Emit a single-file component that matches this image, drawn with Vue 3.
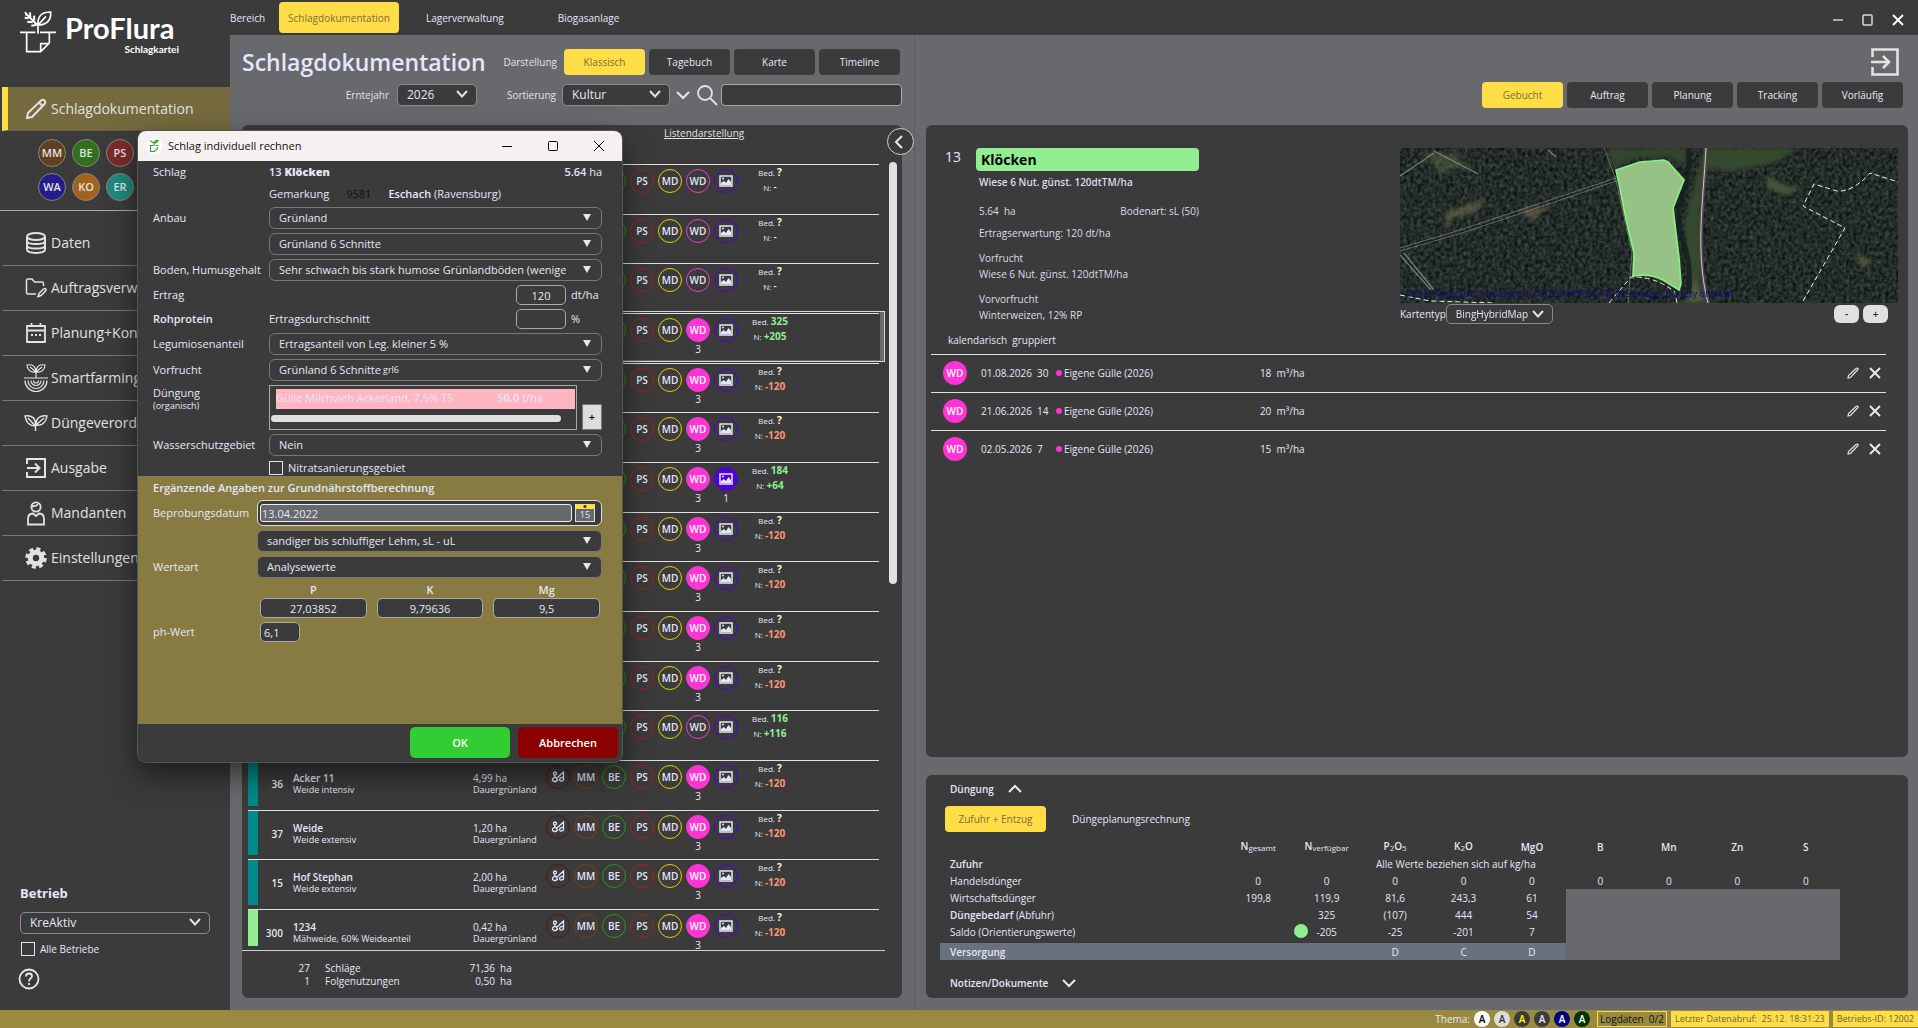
<script setup>
const areas = ['Lagerverwaltung', 'Biogasanlage']
const views = ['Tagebuch', 'Karte', 'Timeline']
const states = ['Auftrag', 'Planung', 'Tracking', 'Vorläufig']
const quick = [
  { t: 'MM', c: '#5f4020' }, { t: 'BE', c: '#30701c' }, { t: 'PS', c: '#7c2a2a' },
  { t: 'WA', c: '#241c8c' }, { t: 'KO', c: '#a0621c' }, { t: 'ER', c: '#1f8a80' },
]
const menu = [
  { t: 'Daten', i: 'db' }, { t: 'Auftragsverwaltung', i: 'folder' }, { t: 'Planung+Kontrolle', i: 'cal' },
  { t: 'Smartfarming', i: 'smart' }, { t: 'Düngeverordnung', i: 'leaf' }, { t: 'Ausgabe', i: 'exit' },
  { t: 'Mandanten', i: 'user' }, { t: 'Einstellungen', i: 'gear' },
]
const unknown = (n, wd) => ({ bed: '?', n, wd })
const fields = [
  unknown('-', 0), unknown('-', 0), unknown('-', 0),
  { bed: '325', n: '+205', wd: 3, sel: true },
  unknown('-120', 3), unknown('-120', 3),
  { bed: '184', n: '+64', wd: 3, img: 1 },
  unknown('-120', 3), unknown('-120', 3), unknown('-120', 3), unknown('-120', 3),
  { bed: '116', n: '+116', wd: 0 },
  { ...unknown('-120', 3), nr: '36', name: 'Acker 11', use: 'Weide intensiv', area: '4,99', color: '#008a8a' },
  { ...unknown('-120', 3), nr: '37', name: 'Weide', use: 'Weide extensiv', area: '1,20', color: '#008a8a' },
  { ...unknown('-120', 3), nr: '15', name: 'Hof Stephan', use: 'Weide extensiv', area: '2,00', color: '#008a8a' },
  { ...unknown('-120', 3), nr: '300', name: '1234', use: 'Mähweide, 60% Weideanteil', area: '0,42', color: '#90ee90' },
]
const tone = (n) => (n[0] === '+' ? 'pos' : n.length > 1 ? 'neg' : '')
const bookings = [
  { d: '01.08.2026', k: '30', m: '18' }, { d: '21.06.2026', k: '14', m: '20' }, { d: '02.05.2026', k: '7', m: '15' },
]
const themes = [
  ['#ffffff', '#000'], ['#dcdcdc', '#333'], ['#3b3b3b', '#ffff00'], ['#3b3b3b', '#e6e6fa'], ['#000080', '#fff'], ['#003300', '#fff'],
]
</script>

<template>
  <div class="app">
    <div class="body">
      <aside class="side">
        <div class="logo">
          <svg width="36" height="42" viewBox="0 0 108 126" fill="none" stroke="#fff" stroke-width="5">
            <path d="M0 64H46M60 64H108M20 64V122H62L88 96V64M62 122V98H88M54 68V40M54 42C52 14 66 3 92 3C94 28 80 42 54 42ZM56 40L78 16" />
            <path d="M52 42L18 8M16 3L20 14M30 4L31 18M42 14L43 28M14 20L26 22M22 32L38 34M34 44L48 42" stroke-width="6" />
          </svg>
          <div class="brand"><b>ProFlura</b><small>Schlagkartei</small></div>
        </div>
        <a class="item active" href="#">
          <svg width="22" height="22" viewBox="0 0 22 22" fill="none" stroke="#e2e2e2" stroke-width="2"><path d="M2 20L3 15L16 2.500Q18 1 19.500 2.500Q21 4 19.500 6L7 19ZM14 4.500L17.500 8" /></svg>
          <span>Schlagdokumentation</span>
        </a>
        <div class="quick">
          <button v-for="q in quick" :key="q.t" :style="{ background: q.c }">{{ q.t }}</button>
        </div>
        <nav class="menu">
          <a v-for="m in menu" :key="m.t" class="item" href="#">
            <svg v-if="m.i === 'db'" width="22" height="22" viewBox="0 0 22 22" fill="none" stroke="#e2e2e2" stroke-width="2"><ellipse cx="11" cy="4.500" rx="9" ry="3.500" /><path d="M2 4.500V17.500C2 22 20 22 20 17.500V4.500M2 9C2 13 20 13 20 9M2 13.500C2 17.500 20 17.500 20 13.500" /></svg>
            <svg v-else-if="m.i === 'folder'" width="22" height="22" viewBox="0 0 22 22" fill="none" stroke="#e2e2e2" stroke-width="1.500"><path d="M11 17H3Q1.500 17 1.500 15.500V3.500Q1.500 2 3 2H7L9.500 5H17Q18.500 5 18.500 6.500V9M13 19.500L14 16.500L18.500 12Q20 11 21 12.500L20.500 14L16 18.500Z" /></svg>
            <svg v-else-if="m.i === 'cal'" width="22" height="22" viewBox="0 0 22 22" fill="none" stroke="#e2e2e2" stroke-width="1.800"><path d="M2 4H20V20H2ZM2 8.500H20M6.500 1V5M15.500 1V5" /><path d="M6 13H8M10 13H12M14 13H16" stroke-width="2" /></svg>
            <svg v-else-if="m.i === 'smart'" width="24" height="30" viewBox="0 0 24 30" fill="none" stroke="#e2e2e2" stroke-width="1.200"><path d="M0 15H24M12 15V7M12 9C6 10 3 6 3 2C8 1 12 3 12 9ZM12 9C18 10 21 6 21 2C16 1 12 3 12 9ZM6 4L12 9L18 4M1 17.500A11 11 0 0 0 23 17.500M4 17.500A8 8 0 0 0 20 17.500M7 17.500A5 5 0 0 0 17 17.500M9.500 17.500A2.500 2.500 0 0 0 14.500 17.500" /></svg>
            <svg v-else-if="m.i === 'leaf'" width="24" height="18" viewBox="0 0 24 18" fill="none" stroke="#e2e2e2" stroke-width="1.500"><path d="M1 2C8 1 12 4 11.500 12C5 12 2 8 1 2ZM4 4L11.500 12V17M23 2C16 1 12 4 12 11C19 12 22 8 23 2ZM20 4L12 11" /></svg>
            <svg v-else-if="m.i === 'exit'" width="22" height="22" viewBox="0 0 22 22" fill="none" stroke="#e2e2e2" stroke-width="2"><path d="M2 7V2H20V20H2V15M2 11H14M10 6.500L14.500 11L10 15.500" /></svg>
            <svg v-else-if="m.i === 'user'" width="20" height="25" viewBox="0 0 20 25" fill="none" stroke="#e2e2e2" stroke-width="1.800"><circle cx="10" cy="6" r="4.600" /><path d="M5.500 5Q10 6 12 3M2 23.500V18Q2 12.500 7 12.500L10 15L13 12.500Q18 12.500 18 18V23.500Z" /></svg>
            <svg v-else width="22" height="22" viewBox="0 0 22 22"><circle cx="11" cy="11" r="5.700" fill="none" stroke="#e2e2e2" stroke-width="5" /><circle cx="11" cy="11" r="9" fill="none" stroke="#e2e2e2" stroke-width="3.500" stroke-dasharray="4 3.070" /></svg>
            <span>{{ m.t }}</span>
          </a>
        </nav>
        <div class="farm">
          <label class="farm-title" for="farm">Betrieb</label>
          <span class="sel chev"><select id="farm"><option>KreAktiv</option></select><svg width="12" height="8" viewBox="0 0 12 8"><path d="M1 1L6 6.500L11 1" /></svg></span>
          <label class="check"><input type="checkbox" />Alle Betriebe</label>
          <button class="help" aria-label="Hilfe"><svg width="22" height="22" viewBox="0 0 22 22" fill="none" stroke="#e8e8e8" stroke-width="1.800"><circle cx="11" cy="11" r="9.500" /><path d="M8 8.500Q8 5.500 11 5.500Q14 5.500 14 8Q14 9.500 12.500 10.500Q11 11.500 11 13.500M11 15V17" /></svg></button>
        </div>
      </aside>

      <div class="content">
        <header class="top">
          <span class="bereich">Bereich</span>
          <button class="tab on">Schlagdokumentation</button>
          <button v-for="a in areas" :key="a" class="tab">{{ a }}</button>
          <div class="win">
            <button aria-label="Minimieren"><svg width="12" height="12" viewBox="0 0 12 12"><path d="M1 6H11" stroke="#a8acb8" stroke-width="2" /></svg></button>
            <button aria-label="Maximieren"><svg width="12" height="12" viewBox="0 0 12 12"><rect x="1" y="1" width="9" height="10" rx="1" fill="none" stroke="#d8d8e8" stroke-width="1.500" /></svg></button>
            <button aria-label="Schließen"><svg width="12" height="12" viewBox="0 0 12 12"><path d="M1 1L11 11M11 1L1 11" stroke="#fff" stroke-width="1.800" /></svg></button>
          </div>
        </header>

        <div class="cols">
          <section class="left">
            <div class="row1">
              <h1>Schlagdokumentation</h1>
              <span class="lab">Darstellung</span>
              <button class="btn on">Klassisch</button>
              <button v-for="v in views" :key="v" class="btn">{{ v }}</button>
            </div>
            <div class="row2">
              <label class="lab" for="year">Erntejahr</label>
              <span class="sel chev year"><select id="year"><option>2026</option></select><svg width="12" height="8" viewBox="0 0 12 8"><path d="M1 1L6 6.500L11 1" /></svg></span>
              <label class="lab wide" for="sort">Sortierung</label>
              <span class="sel chev sort"><select id="sort"><option>Kultur</option></select><svg width="12" height="8" viewBox="0 0 12 8"><path d="M1 1L6 6.500L11 1" /></svg></span>
              <svg class="dir" width="14" height="10" viewBox="0 0 14 10" fill="none" stroke="#e6e6fa" stroke-width="2"><path d="M1 2L7 8L13 2" /></svg>
              <svg width="22" height="22" viewBox="0 0 22 22" fill="none" stroke="#e2e2e2" stroke-width="1.800"><circle cx="9" cy="9" r="7" /><path d="M14 14L21 21" /></svg>
              <input class="search" type="text" aria-label="Suche" />
            </div>
            <div class="panel list-panel">
              <button class="back" aria-label="Zurück"><svg width="10" height="14" viewBox="0 0 10 14" fill="none" stroke="#e6e6fa" stroke-width="2"><path d="M8 1L2 7L8 13" /></svg></button>
              <div class="thumb"></div>
              <div class="list-top"><a href="#">Listendarstellung</a></div>
              <div class="list">
                <div v-for="(f, i) in fields" :key="i" class="field" :class="{ selected: f.sel }">
                  <i class="strip" :style="{ background: f.color || 'transparent' }"></i>
                  <span class="nr">{{ f.nr }}</span>
                  <div class="two name"><b>{{ f.name }}</b><span>{{ f.use }}</span></div>
                  <div class="two area"><template v-if="f.area"><span>{{ f.area }} ha</span><span>Dauergrünland</span></template></div>
                  <div class="rounds">
                    <div class="rc"><i class="sd"><svg width="14" height="12" viewBox="0 0 14 12" fill="none" stroke="#e6e6fa" stroke-width="1.300"><circle cx="4" cy="2.500" r="1.500" /><path d="M3 4L6.500 9Q5 11 3 10.500Q.5 9 2 7.500Q3 6 5 6.500M6 7L12.500 1V9.500M12 6.500Q9 6 8.500 8.500Q9 11.500 12.500 9" /></svg></i></div>
                    <div class="rc"><i class="mm"><template v-if="f.nr">MM</template></i></div>
                    <div class="rc"><i class="be"><template v-if="f.nr">BE</template></i></div>
                    <div class="rc"><i class="ps">PS</i></div>
                    <div class="rc"><i class="md">MD</i></div>
                    <div class="rc"><i class="wd" :class="{ full: f.wd }">WD</i><span v-if="f.wd">{{ f.wd }}</span></div>
                    <div class="rc"><i class="im" :class="{ full: f.img }"><svg width="14" height="12" viewBox="0 0 14 12"><rect x="1" y="1" width="12" height="10" fill="none" stroke="#e6e6fa" stroke-width="1.500" /><path d="M2 10V8L5 6L7 8L9.500 4L12 7V10Z" fill="#e6e6fa" /><circle cx="4" cy="3.500" r="1" fill="#e6e6fa" /></svg></i><span v-if="f.img">{{ f.img }}</span></div>
                  </div>
                  <div class="need">
                    <div>Bed. <b :class="f.bed === '?' ? 'q' : 'pos'">{{ f.bed }}</b></div>
                    <div>N: <b :class="tone(f.n)">{{ f.n }}</b></div>
                  </div>
                </div>
              </div>
              <div class="sums">
                <span class="num">27</span><span>Schläge</span><span class="num">71,36</span><span>ha</span>
                <span class="num">1</span><span>Folgenutzungen</span><span class="num">0,50</span><span>ha</span>
              </div>
            </div>
          </section>

          <section class="right">
            <div class="rhead">
              <button class="out" aria-label="Ausgabe"><svg width="28" height="28" viewBox="0 0 28 28" fill="none" stroke="#e2e2e2" stroke-width="2.600"><path d="M1.500 9V1.500H26.500V26.500H1.500V19M0 14H17M12 8L18 14L12 20" /></svg></button>
              <div class="states">
                <button class="btn on">Gebucht</button>
                <button v-for="s in states" :key="s" class="btn">{{ s }}</button>
              </div>
            </div>
            <div class="panel detail">
              <div class="info">
                <span class="no">13</span>
                <div class="facts">
                  <h2>Klöcken</h2>
                  <p class="semi crop">Wiese 6 Nut. günst. 120dtTM/ha</p>
                  <p class="split"><span>5.64&nbsp; ha</span><span>Bodenart: sL (50)</span></p>
                  <p class="yield">Ertragserwartung: <span class="med">120</span> dt/ha</p>
                  <p>Vorfrucht</p>
                  <p class="med pre">Wiese 6 Nut. günst. 120dtTM/ha</p>
                  <p>Vorvorfrucht</p>
                  <p class="med">Winterweizen, 12% RP</p>
                </div>
                <div class="mapbox">
                  <div class="map">
                    <svg width="100%" height="155" viewBox="0 0 498 155" preserveAspectRatio="none">
                      <defs>
                        <filter id="forest" x="0" y="0" width="100%" height="100%" color-interpolation-filters="sRGB">
                          <feTurbulence type="fractalNoise" baseFrequency="0.28 0.25" numOctaves="4" seed="4" />
                          <feColorMatrix values="0.32 0 0 0 -0.02  0.32 0 0 0 0.01  0.3 0 0 0 0.01  0 0 0 0 1" />
                        </filter>
                        <filter id="soft"><feGaussianBlur stdDeviation="2" /></filter>
                      </defs>
                      <rect width="498" height="155" fill="#20272a" />
                      <rect width="498" height="155" filter="url(#forest)" />
                      <g filter="url(#soft)">
                        <path d="M208 0H288L286 18L270 10H238L212 20Z" fill="#33452f" />
                        <path d="M304 0H400L372 16L330 23L308 20L300 60L302 155H290L284 75L292 45Z" fill="#34482f" />
                        <path d="M46 64L86 50L76 64L52 70L46 84Z" fill="#66694a" opacity=".7" />
                        <path d="M18 5H66L56 10L76 22L60 20L38 26L28 10Z" fill="#5a6744" opacity=".5" />
                        <path d="M120 63L150 58L132 72Z" fill="#806f54" opacity=".6" />
                        <path d="M368 28L385 38L402 40L386 47L366 40Z" fill="#44573a" />
                        <path d="M455 107L474 113L462 119Z" fill="#56593c" />
                        <path d="M294 130L306 155H286Z" fill="#4d5c3c" />
                      </g>
                      <g fill="none" stroke="#9aa09b" stroke-width="1.200" opacity=".7">
                        <path d="M204 0L216 32L222 60L232 105L228 155M0 100L60 82L120 62L216 30M0 103L62 85L122 65L216 33" stroke-width=".8" />
                        <path d="M0 107L31 142M4 105L34 142M34 3L78 26M0 28L34 5M148 2L156 9" />
                      </g>
                      <path d="M306 0C303 55 295 105 308 155" fill="none" stroke="#4c484a" stroke-width="4" />
                      <path d="M306 0C303 55 295 105 308 155" fill="none" stroke="#cfc4ca" stroke-width="1" />
                      <path d="M288 0C293 32 276 54 278 72S292 104 289 145" fill="none" stroke="#151e20" stroke-width="5" opacity=".8" />
                      <path d="M216 22L240 14L264 12L268 14L284 32L273 60L279 110L281 136L279 142L263 132Q250 125 233 128L234 105Q224 65 220 40Z" fill="#96c285" stroke="#86f182" stroke-width="1.700" />
                      <path d="M209 155L231 129Q255 128 275 144L277 155M0 147L30 153L95 155M403 153L445 80L403 58L414 36L437 43Q453 44 470 25L498 34" fill="none" stroke="#e9ece9" stroke-width="1" stroke-dasharray="5 3" />
                    </svg>
                    <span class="credit">©2025 Microsoft Corporation, ©2025 NAVTEQ, ©2025 Image courtesy of NASA</span>
                  </div>
                  <div class="mapbar">
                    <label for="maptype">Kartentyp</label>
                    <span class="sel chev maptype"><select id="maptype"><option>BingHybridMap</option></select><svg width="12" height="8" viewBox="0 0 12 8"><path d="M1 1L6 6.500L11 1" /></svg></span>
                    <div class="zooms"><button class="zoom">-</button><button class="zoom">+</button></div>
                  </div>
                </div>
              </div>
              <p class="grouped">kalendarisch&nbsp; gruppiert</p>
              <div class="bookings">
                <div v-for="b in bookings" :key="b.d" class="booking">
                  <i>WD</i><span class="d">{{ b.d }}</span><span class="k">{{ b.k }}</span><u></u><span class="g">Eigene Gülle (2026)</span><span class="m">{{ b.m }}&nbsp; m³/ha</span>
                  <button aria-label="Bearbeiten"><svg width="12" height="12" viewBox="0 0 12 12" fill="none" stroke="#e2e2e2" stroke-width="1.200"><path d="M1 11L1.500 8.500L9 1.500Q10.500 .5 11.200 2L10.500 3L3.500 10.500Z" /></svg></button>
                  <button aria-label="Löschen"><svg width="12" height="12" viewBox="0 0 12 12"><path d="M1 1L11 11M11 1L1 11" stroke="#e8e8e8" stroke-width="2" /></svg></button>
                </div>
              </div>
            </div>

            <div class="panel duen">
              <div class="fold">Düngung<svg width="14" height="10" viewBox="0 0 14 10" fill="none" stroke="#e8e8f0" stroke-width="2"><path d="M1 8L7 2L13 8" /></svg></div>
              <div class="dtabs"><button class="btn on z">Zufuhr + Entzug</button><button class="plain">Düngeplanungsrechnung</button></div>
              <table>
                <thead><tr><th class="rowhead"></th><th>N<small>gesamt</small></th><th>N<small>verfügbar</small></th><th>P<small>2</small>O<small>5</small></th><th>K<small>2</small>O</th><th>MgO</th><th>B</th><th>Mn</th><th>Zn</th><th>S</th></tr></thead>
                <tbody>
                  <tr><th>Zufuhr</th><td></td><td></td><td colspan="3" class="note">Alle Werte beziehen sich auf kg/ha</td><td colspan="4"></td></tr>
                  <tr><th class="n">Handelsdünger</th><td v-for="i in 9" :key="i">0</td></tr>
                  <tr><th class="n">Wirtschaftsdünger</th><td>199,8</td><td>119,9</td><td>81,6</td><td>243,3</td><td>61</td><td colspan="4" rowspan="5" class="grey"></td></tr>
                  <tr><th>Düngebedarf <span class="n">(Abfuhr)</span></th><td></td><td>325</td><td>(107)</td><td>444</td><td>54</td></tr>
                  <tr><th class="n">Saldo (Orientierungswerte)</th><td></td><td class="dotted"><i></i>-205</td><td>-25</td><td>-201</td><td>7</td></tr>
                  <tr class="gap"><td colspan="6"></td></tr>
                  <tr class="supply"><th>Versorgung</th><td></td><td></td><td>D</td><td>C</td><td>D</td></tr>
                </tbody>
              </table>
              <div class="fold notes">Notizen/Dokumente<svg width="14" height="10" viewBox="0 0 14 10" fill="none" stroke="#e8e8f0" stroke-width="2"><path d="M1 2L7 8L13 2" /></svg></div>
            </div>
          </section>
        </div>
      </div>
    </div>

    <footer class="status">
      <span>Thema:</span>
      <button v-for="(t, i) in themes" :key="i" class="theme" :style="{ background: t[0], color: t[1] }">A</button>
      <span class="log">Logdaten&nbsp; 0/2</span>
      <span class="chip">Letzter Datenabruf:&nbsp; 25.12. 18:31:23</span>
      <span class="chip">Betriebs-ID: 12002</span>
    </footer>

    <div class="dialog" role="dialog" aria-label="Schlag individuell rechnen">
      <div class="title">
        <svg width="16" height="16" viewBox="0 0 16 16"><circle cx="8" cy="8" r="8" fill="#fff" /><path d="M3.500 7.500H7M9.500 7.500H12.500M4.500 7.500V13.500H8.500L11.500 10.500V9M8 8V5L4 2.500M8 5Q9 2 12 2.500Q11 5 8 5" fill="none" stroke="#3aa02c" stroke-width="1.200" /></svg>
        <span>Schlag individuell rechnen</span>
        <button aria-label="Minimieren"><svg width="10" height="10" viewBox="0 0 10 10"><path d="M0 5.500H10" stroke="#000" /></svg></button>
        <button aria-label="Maximieren"><svg width="10" height="10" viewBox="0 0 10 10"><rect x=".5" y=".5" width="9" height="9" rx="1" fill="none" stroke="#000" /></svg></button>
        <button aria-label="Schließen"><svg width="10" height="10" viewBox="0 0 10 10"><path d="M0 0L10 10M10 0L0 10" stroke="#000" /></svg></button>
      </div>
      <div class="form">
        <span class="txt">Schlag</span><div class="txt line"><span class="semi">13 <b>Klöcken</b></span><span><b class="semi">5.64</b> ha</span></div>
        <span></span><div class="txt place"><span>Gemarkung</span><span class="dim">9581</span><span><b class="semi">Eschach</b> (Ravensburg)</span></div>
        <label for="f1">Anbau</label><span class="sel tri"><select id="f1"><option>Grünland</option></select></span>
        <span></span><span class="sel tri"><select aria-label="Kultur"><option>Grünland 6 Schnitte</option></select></span>
        <label for="f3">Boden, Humusgehalt</label><span class="sel tri"><select id="f3"><option>Sehr schwach bis stark humose Grünlandböden (weniger als 15 %)</option></select></span>
        <label for="f4">Ertrag</label><div class="amount"><input id="f4" type="text" value="120" /><span>dt/ha</span></div>
        <label for="f5" class="semi">Rohprotein</label><div class="amount"><span class="avg">Ertragsdurchschnitt</span><input id="f5" type="text" /><span>%</span></div>
        <label for="f6">Legumiosenanteil</label><span class="sel tri"><select id="f6"><option>Ertragsanteil von Leg. kleiner 5 %</option></select></span>
        <label for="f7">Vorfrucht</label><span class="sel tri"><select id="f7"><option>Grünland 6 Schnitte</option></select><em>grl6</em></span>
        <span class="org">Düngung<small>(organisch)</small></span>
        <div class="manure"><div class="mbox"><div class="pink"><span>Gülle Milchvieh Ackerland, 7,5% TS</span><span><b class="semi">50.0</b> t/ha</span></div><div class="hbar"></div></div><button>+</button></div>
        <label for="f8">Wasserschutzgebiet</label><span class="sel tri"><select id="f8"><option>Nein</option></select></span>
        <span></span><label class="check"><input type="checkbox" />Nitratsanierungsgebiet</label>
      </div>
      <div class="form gold">
        <b class="semi span">Ergänzende Angaben zur Grundnährstoffberechnung</b>
        <label for="g1">Beprobungsdatum</label>
        <div class="date"><input id="g1" type="text" value="13.04.2022" /><button aria-label="Kalender"><i></i><span>15</span></button></div>
        <span></span><span class="sel tri"><select aria-label="Bodenart"><option>sandiger bis schluffiger Lehm, sL - uL</option></select></span>
        <label for="g3">Werteart</label><span class="sel tri"><select id="g3"><option>Analysewerte</option></select></span>
        <span></span>
        <div class="npk"><label>P<input type="text" value="27,03852" /></label><label>K<input type="text" value="9,79636" /></label><label>Mg<input type="text" value="9,5" /></label></div>
        <label for="g7">ph-Wert</label><input id="g7" class="ph" type="text" value="6,1" />
      </div>
      <div class="actions"><button class="ok">OK</button><button class="cancel">Abbrechen</button></div>
    </div>
  </div>
</template>

<style>
body { background: #3b3b3b; }
</style>

<style scoped>
* { box-sizing: border-box; }
.app { position: relative; min-height: 100vh; display: flex; flex-direction: column; font: 10px/14px "Segoe UI", "Open Sans", "Noto Sans", sans-serif; color: #e6e6fa; overflow: hidden; }
button, input, select { font: inherit; color: inherit; }
button { border: 0; background: none; padding: 0; margin: 0; }
a { color: inherit; text-decoration: none; }
p, h1, h2 { margin: 0; font-weight: 400; }
svg { display: block; flex: none; }
i { font-style: normal; }
.semi { font-weight: 600; }
.med { font-weight: 500; }
.body { flex: 1; display: flex; }
.side { width: 230px; flex: none; background: #3b3b3b; display: flex; flex-direction: column; }
.logo { height: 87px; padding: 11px 0 0 20px; display: flex; gap: 9px; color: #fff; }
.brand { display: flex; flex-direction: column; width: 114px; font-family: Lato, sans-serif; }
.brand b { font-size: 29px; line-height: 34px; }
.brand small { font-size: 10px; line-height: 10px; font-weight: 700; text-align: right; margin-top: -1px; }
.item { display: flex; align-items: center; height: 45px; margin-left: 2px; border-bottom: 1px solid #777; font-size: 14px; line-height: 20px; color: #e2e2e2; }
.item svg { width: 24px; margin-left: 22px; }
.item span { margin-left: 3px; }
.active { background: #756a3e; border-left: 6px solid #ffdd47; border-bottom-color: #66603f; height: 44px; }
.active svg { margin-left: 16px; }
.quick { display: grid; grid-template-columns: repeat(3, 28px); gap: 6px; padding: 8px 0 0 38px; height: 79px; align-content: start; }
.quick button { height: 28px; border-radius: 50%; border: 1px solid #8c8478; font-size: 11px; font-weight: 600; color: #e2e2e2; }
.menu { border-top: 1px solid #aaa; }
.menu .item:first-child { height: 55px; padding-top: 9px; }
.farm { margin-top: auto; padding: 0 20px 20px; }
.farm-title { display: block; font-size: 13px; line-height: 18px; font-weight: 700; margin-bottom: 10px; }
.check { display: flex; align-items: center; gap: 5px; }
.check input { appearance: none; width: 14px; height: 14px; margin: 0; border: 1px solid #e2e2e2; background: none; }
.farm .check { margin: 8px 0 12px 1px; }
.help { margin-left: -2px; display: block; }
.sel { position: relative; display: block; height: 22px; }
.sel select { appearance: none; width: 100%; height: 100%; background: #3b3b3b; border: 1px solid #8a8a8a; border-radius: 5px; padding: 0 24px 0 9px; font-size: 12px; outline: 0; }
.sel svg { position: absolute; right: 9px; top: 6px; fill: none; stroke: #e2e2e2; stroke-width: 2; pointer-events: none; }
.content { flex: 1; min-width: 0; display: flex; flex-direction: column; }
.top { height: 35px; background: #3b3b3b; display: flex; align-items: center; }
.bereich { width: 49px; margin-top: 1px; }
.tab { height: 31px; padding: 0 27px; font-size: 10px; }
.tab.on { width: 120px; padding: 0; }
.on { background: #ffdd47; color: #7a6f3c; border-radius: 4px; }
.win { margin-left: auto; display: flex; gap: 18px; padding: 5px 14px 0 0; }
.cols { flex: 1; display: flex; background: #68696d; }
.left { width: 685px; flex: none; padding: 14px 12px 12px; display: flex; flex-direction: column; border-right: 1px solid #5c5d61; }
.row1, .row2 { display: flex; align-items: center; }
.row1 { gap: 4px; height: 26px; margin-right: 2px; }
h1 { flex: 1; font-size: 23px; line-height: 30px; font-weight: 600; }
.lab { margin-right: 3px; color: #e2e2e2; }
.btn { width: 81px; height: 26px; border-radius: 4px; background: #3b3b3b; font-size: 10px; }
.btn.on { background: #ffdd47; }
.row2 { justify-content: flex-end; gap: 3px; margin: 9px 0 19px; height: 22px; }
.wide { width: 76px; text-align: right; }
.year { width: 80px; margin-left: 2px; }
.sort { width: 108px; }
.dir { margin: 0 3px; }
.search { width: 181px; height: 22px; background: #3b3b3b; border: 1px solid #aaa; border-radius: 4px; outline: 0; }
.panel { background: #3b3b3b; border-radius: 6px; }
.list-panel { flex: 1; position: relative; display: flex; flex-direction: column; }
.back { position: absolute; right: -12px; top: 3px; width: 27px; height: 27px; border: 1px solid #d0d0d0; border-radius: 50%; background: #3b3b3b; display: flex; align-items: center; justify-content: center; padding-right: 3px; }
.thumb { position: absolute; right: 5px; top: 37px; width: 8px; height: 422px; border-radius: 4px; background: #e0e0e0; }
.list-top { height: 39px; padding-left: 422px; }
.list-top a { text-decoration: underline; line-height: 16px; color: #e2e2e2; }
.list { flex: 1; margin-right: 17px; padding-left: 6px; border-bottom: 1px solid #d0d0d0; display: grid; grid-template-rows: repeat(15, minmax(0, 1fr)) 41px; overflow: hidden; }
.field { position: relative; border-top: 1px solid #e0e0e0; margin-right: 6px; display: flex; min-height: 0; }
.selected::after { content: ""; position: absolute; inset: -3px -6px 1px -6px; border: 1px solid #d8d8d8; box-shadow: inset -4px -1px 0 #68696d; }
.strip { width: 10px; margin-bottom: 4px; }
.nr { width: 25px; text-align: right; padding-top: 16px; font-weight: 600; }
.two { display: flex; flex-direction: column; padding-top: 11px; line-height: 12px; font-size: 9px; }
.two > :first-child { font-size: 10px; }
.name { width: 190px; padding-left: 10px; }
.name b { font-weight: 600; }
.area { width: 73px; }
.rounds { display: flex; gap: 4px; padding-top: 4px; }
.rc { width: 24px; display: flex; flex-direction: column; align-items: center; }
.rc i { width: 24px; height: 24px; flex: none; border: 1px solid; border-radius: 50%; display: flex; align-items: center; justify-content: center; font-size: 10px; font-weight: 600; }
.rc span { line-height: 15px; }
.rc .sd { border-color: #561414; }
.rc .mm { border-color: #7a4408; }
.rc .be { border-color: #2c9a10; }
.rc .ps { border-color: #a81e1e; }
.rc .md { border-color: #e8d000; }
.rc .wd { border-color: #f03cd0; }
.rc .im { border-color: #5000d8; }
.wd.full, .booking i { background: #ff33d6; color: #fff; }
.im.full { background: #5000d8; }
.need { width: 64px; font-size: 8px; text-align: center; }
.need b { font-size: 10px; font-weight: 600; }
.need .q { color: #fffacd; font-weight: 700; }
.need .pos { color: #90ee90; font-weight: 700; }
.need .neg { color: #ff9470; font-weight: 700; }
.sums { display: grid; grid-template-columns: 68px 119px 56px 1fr; column-gap: 5px; line-height: 13px; padding: 11px 0 10px; }
.sums span:nth-child(4n + 2) { padding-left: 10px; }
.num { text-align: right; }
.right { flex: 1; min-width: 0; padding: 13px 10px 12px 11px; display: flex; flex-direction: column; gap: 18px; }
.rhead { display: flex; flex-direction: column; align-items: flex-end; padding-right: 5px; height: 59px; gap: 6px; }
.out { margin-right: 4px; }
.states { display: flex; gap: 4px; }
.detail { flex: 1; padding: 23px 10px 0 5px; }
.info { display: flex; }
.no { width: 45px; padding-left: 14px; font-size: 14px; line-height: 18px; }
.facts { width: 223px; }
.facts p { padding-left: 3px; line-height: 16px; color: #dcdcea; }
.facts h2 { background: #90ee90; color: #000; font-size: 14px; line-height: 23px; font-weight: 700; border-radius: 4px; padding-left: 5px; }
.facts .crop { margin: 3px 0 13px; }
.split { display: flex; justify-content: space-between; margin-bottom: 6px; }
.facts .yield, .facts .pre { margin-bottom: 9px; }
.mapbox { flex: 1; margin-left: 201px; }
.map { position: relative; height: 155px; }
.credit { position: absolute; left: 5px; bottom: 2px; color: #0a0a8c; white-space: nowrap; font-size: 9px; }
.mapbar { display: flex; align-items: center; height: 22px; }
.mapbar label { min-width: 43px; white-space: nowrap; }
.maptype { width: 107px; height: 20px; }
.maptype select { font-size: 10px; }
.zooms { margin-left: auto; display: flex; gap: 4px; padding-right: 10px; }
.zoom { width: 25px; height: 18px; border-radius: 6px; background: #e0e0e0; color: #222; font-weight: 600; }
.grouped { padding-left: 17px; line-height: 16px; margin: 7px 0 6px; }
.bookings { margin-right: 12px; }
.booking { border-top: 1px solid #e0e0e0; height: 38px; display: flex; align-items: center; padding: 0 5px 2px 0; }
.booking i { width: 24px; height: 24px; border-radius: 50%; font-size: 10px; font-weight: 600; display: flex; align-items: center; justify-content: center; margin: 0 14px 0 12px; }
.d { width: 56px; }
.k { width: 19px; }
.booking u { width: 6px; height: 6px; border-radius: 50%; background: #ff33d6; margin-right: 2px; }
.m { margin: 0 auto 0 107px; }
.booking button { margin-left: 10px; }
.duen { padding: 7px 68px 8px 14px; }
.fold { display: flex; align-items: center; gap: 14px; padding-left: 10px; height: 14px; font-weight: 600; }
.dtabs { display: flex; gap: 26px; padding-left: 5px; margin: 10px 0 6px; }
.z { width: 101px; }
table { width: 100%; border-collapse: collapse; table-layout: fixed; }
th, td { padding: 0; height: 17px; text-align: center; font-weight: 500; line-height: 14px; }
th { font-weight: 600; }
.rowhead { width: 284px; }
th small { font-size: 8px; font-weight: 400; vertical-align: -1px; }
tbody th { text-align: left; padding-left: 10px; }
.n { font-weight: 500; }
.note { text-align: left; padding-left: 15px; white-space: nowrap; }
.grey { background: #68696d; }
.dotted { position: relative; }
.dotted i { position: absolute; left: 2px; top: 1px; width: 14px; height: 14px; border-radius: 50%; background: #90ee90; }
.gap td { height: 3px; line-height: 0; }
.supply th, .supply td { background: #69717d; }
.notes { margin-top: 16px; }
.status { height: 18px; background: #998a40; display: flex; align-items: center; justify-content: flex-end; gap: 4px; }
.theme { width: 16px; height: 16px; border-radius: 50%; font-weight: 600; line-height: 16px; }
.log { border: 1px solid #ffdd47; color: #111; height: 16px; line-height: 14px; padding: 0 2px; margin-left: 3px; }
.chip { background: #ffdd47; color: #6e642f; height: 16px; line-height: 16px; padding: 0 4px; font-size: 9px; }
.dialog { position: absolute; left: 138px; top: 131px; width: 484px; background: #3b3b3b; border-radius: 8px; overflow: hidden; box-shadow: 0 0 0 1px #555, 0 12px 30px rgba(0, 0, 0, .55); font-size: 11px; line-height: 16px; }
.title { height: 30px; background: #f4f1f0; color: #111; display: flex; align-items: center; gap: 6px; padding-left: 8px; }
.title span { margin-right: auto; }
.title button { width: 40px; height: 30px; display: flex; align-items: center; justify-content: center; }
.title button:last-child { margin-right: 3px; }
.form { display: grid; grid-template-columns: 116px 1fr; row-gap: 4px; align-items: center; padding: 2px 20px 0 15px; }
.form label, .form .org { white-space: nowrap; }
.txt { line-height: 18px; height: 18px; }
.line { display: flex; justify-content: space-between; }
.place { display: flex; gap: 17px; }
.dim { color: #111; }
.tri::after { content: ""; position: absolute; right: 11px; top: 7px; border: 4px solid transparent; border-top: 7px solid #e6e6fa; border-bottom: 0; pointer-events: none; }
.form .tri select { border-radius: 6px; border-color: #777; padding-right: 35px; font-size: 11px; }
.tri em { position: absolute; left: 114px; top: 4px; font-style: normal; font-size: 9px; line-height: 14px; }
.form input[type="text"] { background: #3b3b3b; border: 1px solid #aaa; border-radius: 5px; height: 20px; outline: 0; padding: 0 3px; }
.amount { display: flex; justify-content: flex-end; gap: 5px; }
.amount input { width: 50px; text-align: center; }
.amount input + span { width: 31px; line-height: 20px; }
.avg { margin-right: auto; line-height: 20px; }
.org { align-self: start; }
.org small { display: block; font-size: 9px; line-height: 10px; }
.manure { display: flex; align-items: flex-end; gap: 5px; height: 45px; }
.mbox { flex: 1; height: 45px; border: 1px solid #aaa; padding: 3px 1px 0; }
.pink { margin-left: 5px; height: 20px; background: #ffb6c1; display: flex; justify-content: space-between; padding-right: 32px; white-space: nowrap; line-height: 18px; color: #e6e6fa; }
.hbar { width: 290px; height: 7px; border-radius: 4px; background: #e0e0e0; margin-top: 6px; }
.manure button { width: 20px; height: 26px; background: #ddd; border: 1px solid #777; color: #000; font-weight: 600; }
.form .check { height: 16px; }
.gold { background: #887b41; grid-template-columns: 104px 1fr; padding-top: 3px; min-height: 248px; align-content: start; }
.span { grid-column: span 2; line-height: 17px; }
.date { height: 26px; border: 1px solid #ddd; border-radius: 6px; background: #3b3b3b; display: flex; align-items: center; gap: 3px; padding: 0 6px 0 2px; }
.form .date input { flex: 1; min-width: 0; height: 18px; background: #68696d; border: 1px solid #eee; border-radius: 3px; padding: 0 1px; }
.date button { width: 20px; height: 18px; background: #68696d; border: 1px solid #ddd; border-top: 0; display: flex; flex-direction: column; font-size: 9px; line-height: 12px; text-align: center; }
.date button i { height: 5px; background: radial-gradient(circle at 50% 50%, #333 1px, #ffdd47 2px); }
.date button span { display: block; }
.npk { display: grid; grid-template-columns: repeat(3, 1fr); gap: 10px; margin: 0 2px 0 3px; }
.npk label { text-align: center; font-weight: 600; line-height: 16px; }
.npk input { width: 100%; text-align: center; font-weight: 400; display: block; }
.form .ph { width: 40px; margin-left: 3px; }
.actions { display: flex; justify-content: flex-end; gap: 8px; padding: 3px 4px 4px; }
.actions button { width: 100px; height: 31px; border-radius: 5px; font-weight: 600; color: #fff; }
.ok { background: #32cd32; }
.cancel { background: #8b0000; }
</style>
